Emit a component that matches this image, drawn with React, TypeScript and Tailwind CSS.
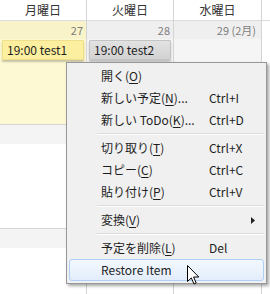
import { ReactNode } from "react";

const FONT = "font-['Noto_Sans_CJK_JP','Noto_Sans',sans-serif]";

type Item =
  | { sep: true }
  | { label: ReactNode; key?: string; arrow?: boolean; hover?: boolean; sep?: false };

const u = (c: string) => <span className="underline underline-offset-[2px]">{c}</span>;

const ITEMS: Item[] = [
  { label: <>開く({u("O")})</> },
  { label: <>新しい予定({u("N")})...</>, key: "Ctrl+I" },
  { label: <>新しい ToDo({u("K")})...</>, key: "Ctrl+D" },
  { sep: true },
  { label: <>切り取り({u("T")})</>, key: "Ctrl+X" },
  { label: <>コピー({u("C")})</>, key: "Ctrl+C" },
  { label: <>貼り付け({u("P")})</>, key: "Ctrl+V" },
  { sep: true },
  { label: <>変換({u("V")})</>, arrow: true },
  { sep: true },
  { label: <>予定を削除({u("L")})</>, key: "Del" },
  { label: "Restore Item", hover: true },
];

export default function App() {
  return (
    <div className={`relative h-[294px] w-[270px] overflow-hidden bg-white text-[12px] text-[#1e1e1e] ${FONT}`}>
      <div className="flex h-full">
        {/* Monday */}
        <div className="flex w-[87px] flex-col border-r border-[#d4d4d4]">
          <Head>月曜日</Head>
          <div className="flex h-[18px] items-center justify-end bg-[#f9f3c9] pr-[3px] text-[11px] text-[#7d7d7d]">27</div>
          <div className="h-[85px] bg-[#fdf9d3] px-[2px] pt-[1px]">
            <div className="flex h-[20px] items-center rounded-[1px] border border-[#efdf8a] bg-[#fcef9f] pl-[4px] shadow-[0_2px_2px_rgba(0,0,0,0.22)]">
              19:00 test1
            </div>
          </div>
          <Bands />
        </div>
        {/* Tuesday */}
        <div className="flex w-[87px] flex-col border-r border-[#d4d4d4]">
          <Head>火曜日</Head>
          <div className="flex h-[18px] items-center justify-end bg-[#efefef] pr-[3px] text-[11px] text-[#7d7d7d]">28</div>
          <div className="h-[85px] bg-[#f5f5f5] px-[2px] pt-[1px]">
            <div className="flex h-[20px] items-center rounded-[1px] border border-[#c4c4c4] bg-linear-to-b from-[#e2e2e2] to-[#d2d2d2] pl-[4px] shadow-[0_2px_2px_rgba(0,0,0,0.22)]">
              19:00 test2
            </div>
          </div>
          <Bands />
        </div>
        {/* Wednesday */}
        <div className="flex w-[88px] flex-col border-r border-[#d4d4d4]">
          <Head>水曜日</Head>
          <div className="flex h-[18px] items-center justify-end bg-[#efefef] pr-[5px] text-[11px] text-[#7d7d7d]">29 (2月)</div>
          <div className="h-[85px] bg-[#f5f5f5]" />
          <Bands />
        </div>
        <div className="flex flex-1 flex-col">
          <div className="h-[21px] border-b border-[#dcdcdc]" />
        </div>
      </div>

      {/* context menu */}
      <div className="absolute left-[66px] top-[62px] w-[201px] border border-[#979797] bg-[#f0f0f0] py-[2px] shadow-[2px_2px_3px_rgba(0,0,0,0.35)]">
        {ITEMS.map((it, i) =>
          it.sep ? (
            <div key={i} className="ml-[30px] mr-[2px] flex h-[6px] flex-col justify-center">
              <div className="border-t border-[#dcdcdc]" />
              <div className="border-t border-white" />
            </div>
          ) : (
            <div
              key={i}
              className={`mx-[2px] flex h-[22px] items-center rounded-[3px] border pl-[31px] ${
                it.hover ? "border-[#aecff7] bg-linear-to-b from-[#f3f8fe] to-[#e3edfb]" : "border-transparent"
              }`}
            >
              <span className="w-[108px] whitespace-nowrap">{it.label}</span>
              {it.key && <span>{it.key}</span>}
              {it.arrow && (
                <svg className="ml-[42px]" width="4" height="7" viewBox="0 0 4 7">
                  <path d="M0 0 L4 3.5 L0 7 Z" fill="#222" />
                </svg>
              )}
            </div>
          )
        )}
      </div>

      {/* mouse cursor */}
      <svg className="absolute left-[187px] top-[265px]" width="13" height="21" viewBox="0 0 13 21">
        <path d="M0.5 0.5 L0.5 16.5 L4.3 12.9 L7 19 L9.2 18 L6.6 12 L11.8 12 Z" fill="#fff" stroke="#000" strokeWidth="1" strokeLinejoin="miter" />
      </svg>
    </div>
  );
}

function Head({ children }: { children: ReactNode }) {
  return (
    <div className="flex h-[21px] items-center justify-center border-b border-[#dcdcdc] text-[12px] text-[#333]">
      {children}
    </div>
  );
}

function Bands() {
  return (
    <>
      <div className="h-[20px] border-t border-[#d6d6d6] bg-[#f4f4f4]" />
      <div className="h-[84px] bg-white" />
      <div className="h-[20px] border-t border-[#d6d6d6] bg-[#f4f4f4]" />
      <div className="flex-1 bg-white" />
    </>
  );
}
